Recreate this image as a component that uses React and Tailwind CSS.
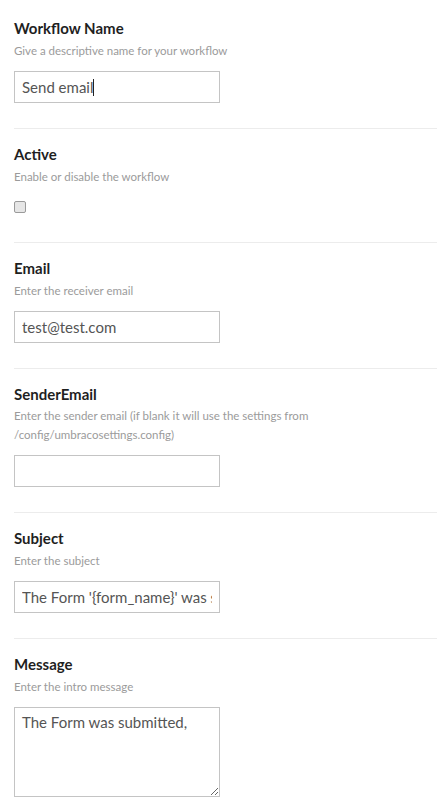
import React from 'react';

const font = { fontFamily: 'Lato, "Open Sans", sans-serif' };

const Field = ({ title, desc, children, last }) => (
  <div className={`pt-[15px] ${last ? 'pb-[14px]' : 'pb-[25px] border-b border-[#ececec]'}`}>
    <div className="text-[15px] leading-[20px] font-bold text-[#1f1f1f]">{title}</div>
    <div className="mt-[3px] text-[11.5px] leading-[19px] text-[#9b9b9b]">{desc}</div>
    <div className="mt-[11px]">{children}</div>
  </div>
);

const inputCls =
  'block w-[206px] h-[32px] border border-[#c4c4c4] bg-white px-[7px] text-[15px] text-[#555] outline-none';

export default function App() {
  return (
    <div className="min-h-screen bg-white pl-[14px] pr-[10px] pt-[3px]" style={font}>
      <Field title="Workflow Name" desc="Give a descriptive name for your workflow">
        <div className={`${inputCls} flex items-center`}>
          <span>Send email</span>
          <span className="inline-block w-[1px] h-[17px] bg-[#222]" />
        </div>
      </Field>

      <Field title="Active" desc="Enable or disable the workflow">
        <div className="pt-[4px] pb-[4px]">
          <input
            type="checkbox"
            className="block appearance-none w-[12px] h-[12px] m-0 rounded-[2px] border border-[#9a9a9a] bg-[#e6e6e6]"
          />
        </div>
      </Field>

      <Field title="Email" desc="Enter the receiver email">
        <input className={inputCls} defaultValue="test@test.com" style={font} />
      </Field>

      <Field
        title="SenderEmail"
        desc={
          <span className="block leading-[18.5px]">
            Enter the sender email (if blank it will use the settings from
            <br />
            /config/umbracosettings.config)
          </span>
        }
      >
        <input className={inputCls} defaultValue="" style={font} />
      </Field>

      <Field title="Subject" desc="Enter the subject">
        <input className={inputCls} defaultValue="The Form '{form_name}' was submitted" style={font} />
      </Field>

      <Field title="Message" desc="Enter the intro message" last>
        <textarea
          className="block w-[206px] h-[90px] border border-[#c4c4c4] bg-white px-[7px] py-[4px] text-[15px] leading-[20px] text-[#555] outline-none"
          style={font}
          defaultValue="The Form was submitted,"
        />
      </Field>
    </div>
  );
}
